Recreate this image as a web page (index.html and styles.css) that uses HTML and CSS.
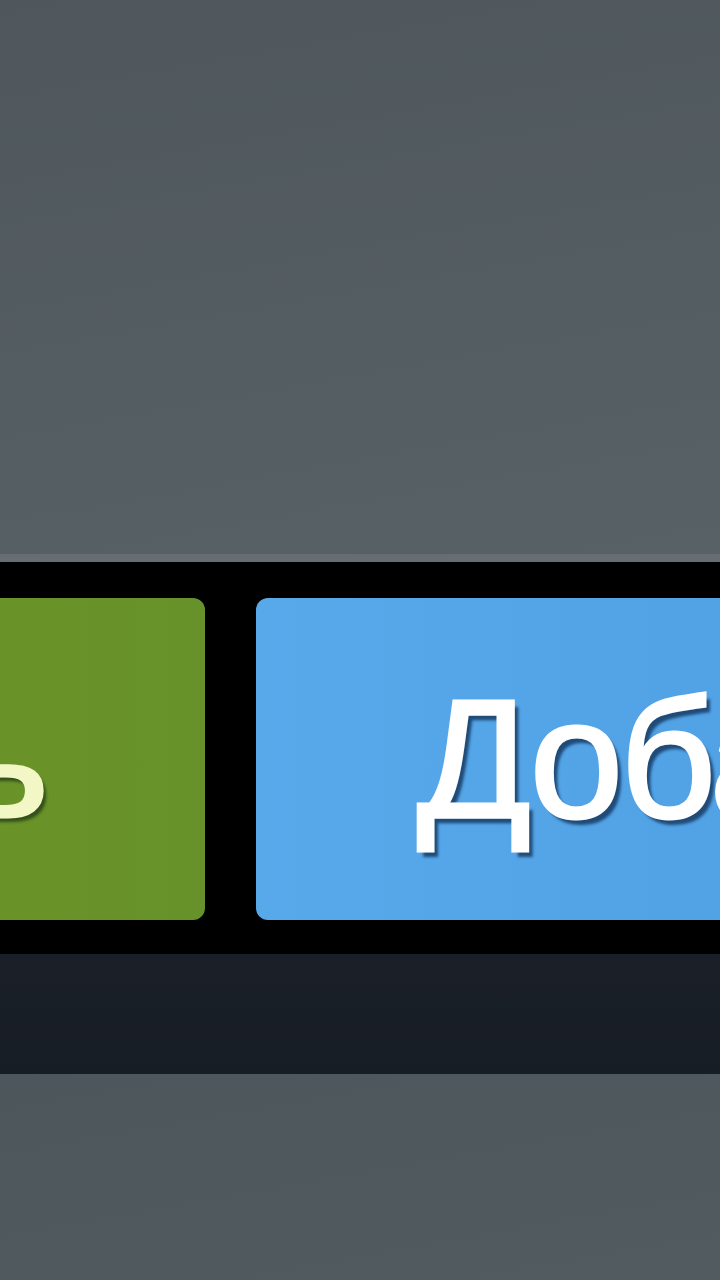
FILE: index.html
```html
<!DOCTYPE html>
<html lang="ru">
<head>
<meta charset="utf-8">
<link rel="stylesheet" href="styles.css">
</head>
<body>
<div class="page">
  <div class="top"></div>
  <div class="bar">
    <div class="btn green"><span>Купить</span></div>
    <div class="btn blue"><span>Добавить в корзину</span></div>
  </div>
  <div class="strip"></div>
  <div class="bottom"></div>
</div>
</body>
</html>
```
FILE: styles.css
```css
html, body {
  margin: 0;
  padding: 0;
  width: 720px;
  height: 1280px;
  overflow: hidden;
  background: #4e575c;
}
.page {
  display: flex;
  flex-direction: column;
  width: 720px;
  height: 1280px;
  overflow: hidden;
  font-family: "Liberation Sans", Arial, sans-serif;
}
.top {
  flex: none;
  height: 554px;
  background: linear-gradient(170deg, #4f575c 0%, #535c61 50%, #576166 100%);
  border-bottom: 8px solid #666e73;
}
.bar {
  flex: none;
  display: flex;
  gap: 51px;
  background: #000;
  padding: 36px 0 34px;
  overflow: hidden;
}
.btn {
  flex: none;
  height: 322px;
  border-radius: 12px;
  display: flex;
  align-items: center;
  font-size: 168px;
  font-weight: 400;
  letter-spacing: -3px;
  white-space: nowrap;
}
.green {
  width: 600px;
  margin-left: -395px;
  justify-content: flex-end;
  padding-right: 159px;
  box-sizing: border-box;
  background: linear-gradient(90deg, #6e9a2a 0%, #6a9428 60%, #67912a 100%);
  color: #f3f7c6;
  -webkit-text-stroke: 3px #f3f7c6;
  text-shadow: 4px 5px 3px #33501a;
}
.blue {
  width: 1400px;
  padding-left: 161px;
  box-sizing: border-box;
  background: linear-gradient(90deg, #58a9ea 0%, #52a3e6 30%, #4b9de0 100%);
  color: #ffffff;
  -webkit-text-stroke: 3px #ffffff;
  text-shadow: 5px 6px 3px #1f4b78;
}
.strip {
  flex: none;
  height: 120px;
  background: linear-gradient(180deg, #1a1f28 0%, #171d25 100%);
}
.bottom {
  flex: 1;
  background: linear-gradient(170deg, #4d565b 0%, #525b60 100%);
}
```
